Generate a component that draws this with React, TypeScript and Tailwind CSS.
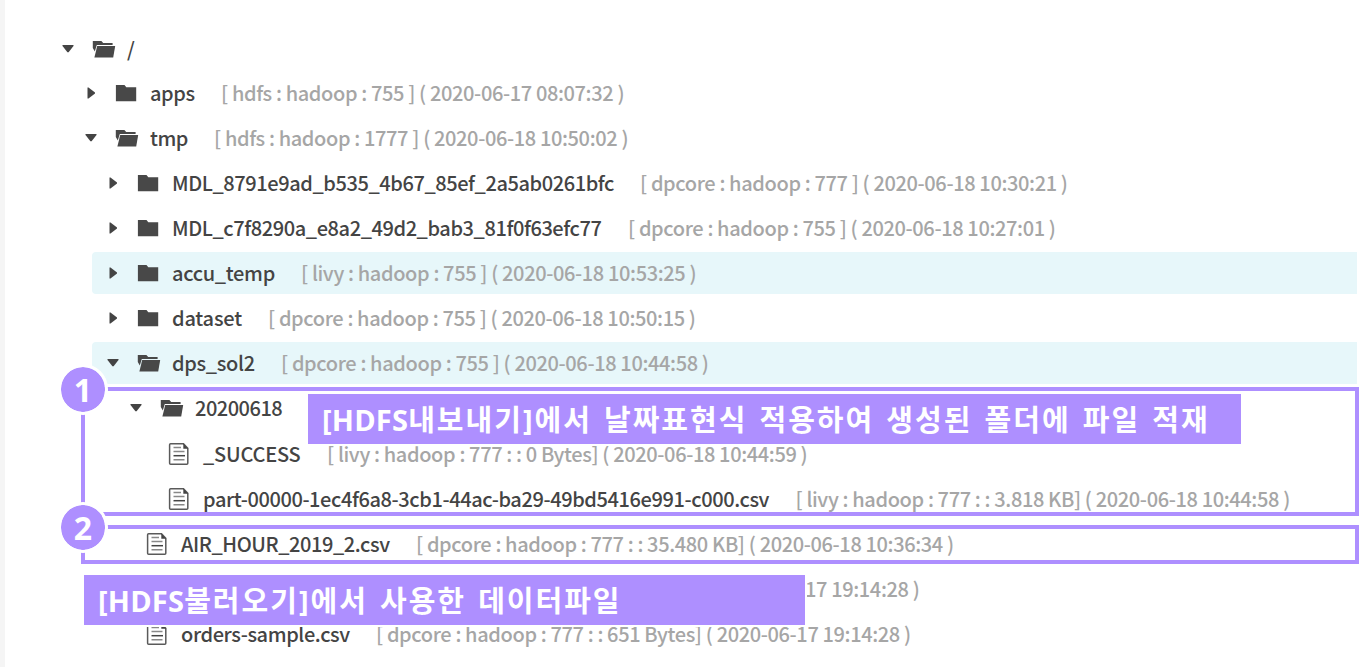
import React from "react";

type Kind = "open" | "closed" | "file";

interface Node {
  kind: Kind;
  indent: string;
  name: string;
  nameClass: string;
  meta?: string;
  active?: boolean;
}

const rows: Node[] = [
  { kind: "open", indent: "pl-[62px]", name: "/", nameClass: "w-[60px]" },
  { kind: "closed", indent: "pl-[85px]", name: "apps", nameClass: "w-[71px] tracking-[-0.4px]", meta: "[ hdfs : hadoop : 755 ] ( 2020-06-17 08:07:32 )" },
  { kind: "open", indent: "pl-[85px]", name: "tmp", nameClass: "w-[64px] tracking-[-0.5px]", meta: "[ hdfs : hadoop : 1777 ] ( 2020-06-18 10:50:02 )" },
  { kind: "closed", indent: "pl-[107px]", name: "MDL_8791e9ad_b535_4b67_85ef_2a5ab0261bfc", nameClass: "w-[468px] tracking-[-0.41px]", meta: "[ dpcore : hadoop : 777 ] ( 2020-06-18 10:30:21 )" },
  { kind: "closed", indent: "pl-[107px]", name: "MDL_c7f8290a_e8a2_49d2_bab3_81f0f63efc77", nameClass: "w-[456px] tracking-[-0.41px]", meta: "[ dpcore : hadoop : 755 ] ( 2020-06-18 10:27:01 )" },
  { kind: "closed", indent: "pl-[107px]", name: "accu_temp", nameClass: "w-[129px] tracking-[-0.3px]", meta: "[ livy : hadoop : 755 ] ( 2020-06-18 10:53:25 )", active: true },
  { kind: "closed", indent: "pl-[107px]", name: "dataset", nameClass: "w-[96px] tracking-[-0.2px]", meta: "[ dpcore : hadoop : 755 ] ( 2020-06-18 10:50:15 )" },
  { kind: "open", indent: "pl-[107px]", name: "dps_sol2", nameClass: "w-[109px] tracking-[-0.3px]", meta: "[ dpcore : hadoop : 755 ] ( 2020-06-18 10:44:58 )", active: true },
  { kind: "open", indent: "pl-[130px]", name: "20200618", nameClass: "w-[110px] tracking-[-0.5px]" },
  { kind: "file", indent: "pl-[168px]", name: "_SUCCESS", nameClass: "w-[124px] tracking-[-0.2px]", meta: "[ livy : hadoop : 777 : : 0 Bytes] ( 2020-06-18 10:44:59 )" },
  { kind: "file", indent: "pl-[168px]", name: "part-00000-1ec4f6a8-3cb1-44ac-ba29-49bd5416e991-c000.csv", nameClass: "w-[592.5px] tracking-[-0.4px]", meta: "[ livy : hadoop : 777 : : 3.818 KB] ( 2020-06-18 10:44:58 )" },
  { kind: "file", indent: "pl-[146px]", name: "AIR_HOUR_2019_2.csv", nameClass: "w-[235px] tracking-[-0.42px]", meta: "[ dpcore : hadoop : 777 : : 35.480 KB] ( 2020-06-18 10:36:34 )" },
  { kind: "file", indent: "pl-[146px]", name: "", nameClass: "w-[624px]", meta: "17 19:14:28 )" },
  { kind: "file", indent: "pl-[146px]", name: "orders-sample.csv", nameClass: "w-[195px] tracking-[-0.4px]", meta: "[ dpcore : hadoop : 777 : : 651 Bytes] ( 2020-06-17 19:14:28 )" },
];

function Caret({ open }: { open: boolean }) {
  return (
    <svg className="mr-[18px] h-3 w-3 shrink-0 fill-[#444]" viewBox="0 0 12 12">
      {open ? <path d="M.5 2h11v1L6.6 9.2H5.4L.5 3z" /> : <path d="M2.5 .4h1L10 5.6v.8L3.5 11.6h-1z" />}
    </svg>
  );
}

function Icon({ kind }: { kind: Kind }) {
  if (kind === "file") {
    return (
      <svg className="mr-[13px] h-6 w-[22px] shrink-0" viewBox="0 0 22 24" fill="none">
        <path d="M2.6 1.7h12.9l4.3 4.6v15q0 1-1 1H2.6q-1 0-1-1V2.7q0-1 1-1z" stroke="#5a5a5a" strokeWidth="1.5" />
        <path d="M15.3 1.5v5.3h4.8z" fill="#444" />
        <path d="M5.5 5.5h7.5M5.5 9.5h11M5.5 17.8h11" stroke="#888" strokeWidth="1.4" />
        <path d="M5.5 13.7h11.5" stroke="#444" strokeWidth="1.5" />
      </svg>
    );
  }
  return (
    <svg className="mr-[11px] h-[18px] w-6 shrink-0 fill-[#484848]" viewBox="0 0 24 18">
      {kind === "open" ? (
        <>
          <path d="M.8 1h8.6l1.8 2.1h9.4v2H4.8L2.8 11.5 .8 8z" />
          <path d="M5.2 6.1h18L21.2 17.4H2.4z" />
        </>
      ) : (
        <path d="M.9 1h8.6l1.8 2.2h9.9v14.1H.9z" />
      )}
    </svg>
  );
}

function Row({ node }: { node: Node }) {
  return (
    <div className="grid h-[45.13px] items-center first:h-[43px]">
      {node.active && <div className="col-start-1 row-start-1 mr-[2px] ml-[92px] h-[42px] rounded-l-[4px] bg-[#e7f7fa]" />}
      <div className={`col-start-1 row-start-1 flex items-center whitespace-pre ${node.indent}`}>
        {node.kind !== "file" && <Caret open={node.kind === "open"} />}
        <Icon kind={node.kind} />
        <span className={`shrink-0 ${node.nameClass}`}>{node.name}</span>
        <span className="tracking-[-0.37px] text-[#a6a6a6]">{node.meta}</span>
      </div>
    </div>
  );
}

function Badge({ n, className }: { n: string; className: string }) {
  return (
    <div className={`absolute flex h-[51px] w-[50px] items-center justify-center rounded-full border-[3px] border-white bg-[#ae8fff] bg-clip-padding font-['Open_Sans',sans-serif] text-[32px] leading-none font-bold text-white ${className}`}>
      {n}
    </div>
  );
}

function Caption({ latin, action, text, className }: { latin: string; action: string; text: string; className: string }) {
  return (
    <div className={`absolute flex h-[50px] items-center bg-[#ae8fff] pt-[2px] pl-[14px] font-['Open_Sans','Noto_Sans_CJK_KR',sans-serif] text-[29px] font-bold whitespace-nowrap text-white shadow-[0_0_0_2px_white] ${className}`}>
      <span className="tracking-[0.2px]">{latin}</span>
      <span className="tracking-[2px] [word-spacing:2.6px]">
        {action}
        {text}
      </span>
    </div>
  );
}

export default function App() {
  return (
    <div className="relative h-[667px] w-[1359px] overflow-hidden border-l-[5px] border-[#f5f5f5] bg-white">
      <main className="-ml-[5px] pt-[27px] font-['Noto_Sans_CJK_KR',sans-serif] text-[20px] leading-[30px] font-medium text-[#444]">
        {rows.map((node, i) => (
          <Row key={i} node={node} />
        ))}
      </main>
      <div className="absolute top-[387px] left-[76px] h-[129px] w-[1278px] border-4 border-[#ae8fff]" />
      <div className="absolute top-[525px] left-[76px] h-[39px] w-[1278px] border-4 border-[#ae8fff]" />
      <Badge n="1" className="top-[364px] left-[53px]" />
      <Badge n="2" className="top-[502px] left-[53px]" />
      <Caption className="top-[394px] left-[303px] w-[933px]" latin="[HDFS" action="내보내기]" text="에서 날짜표현식 적용하여 생성된 폴더에 파일 적재" />
      <Caption className="top-[575px] left-[79px] w-[721px]" latin="[HDFS" action="불러오기]" text="에서 사용한 데이터파일" />
    </div>
  );
}
